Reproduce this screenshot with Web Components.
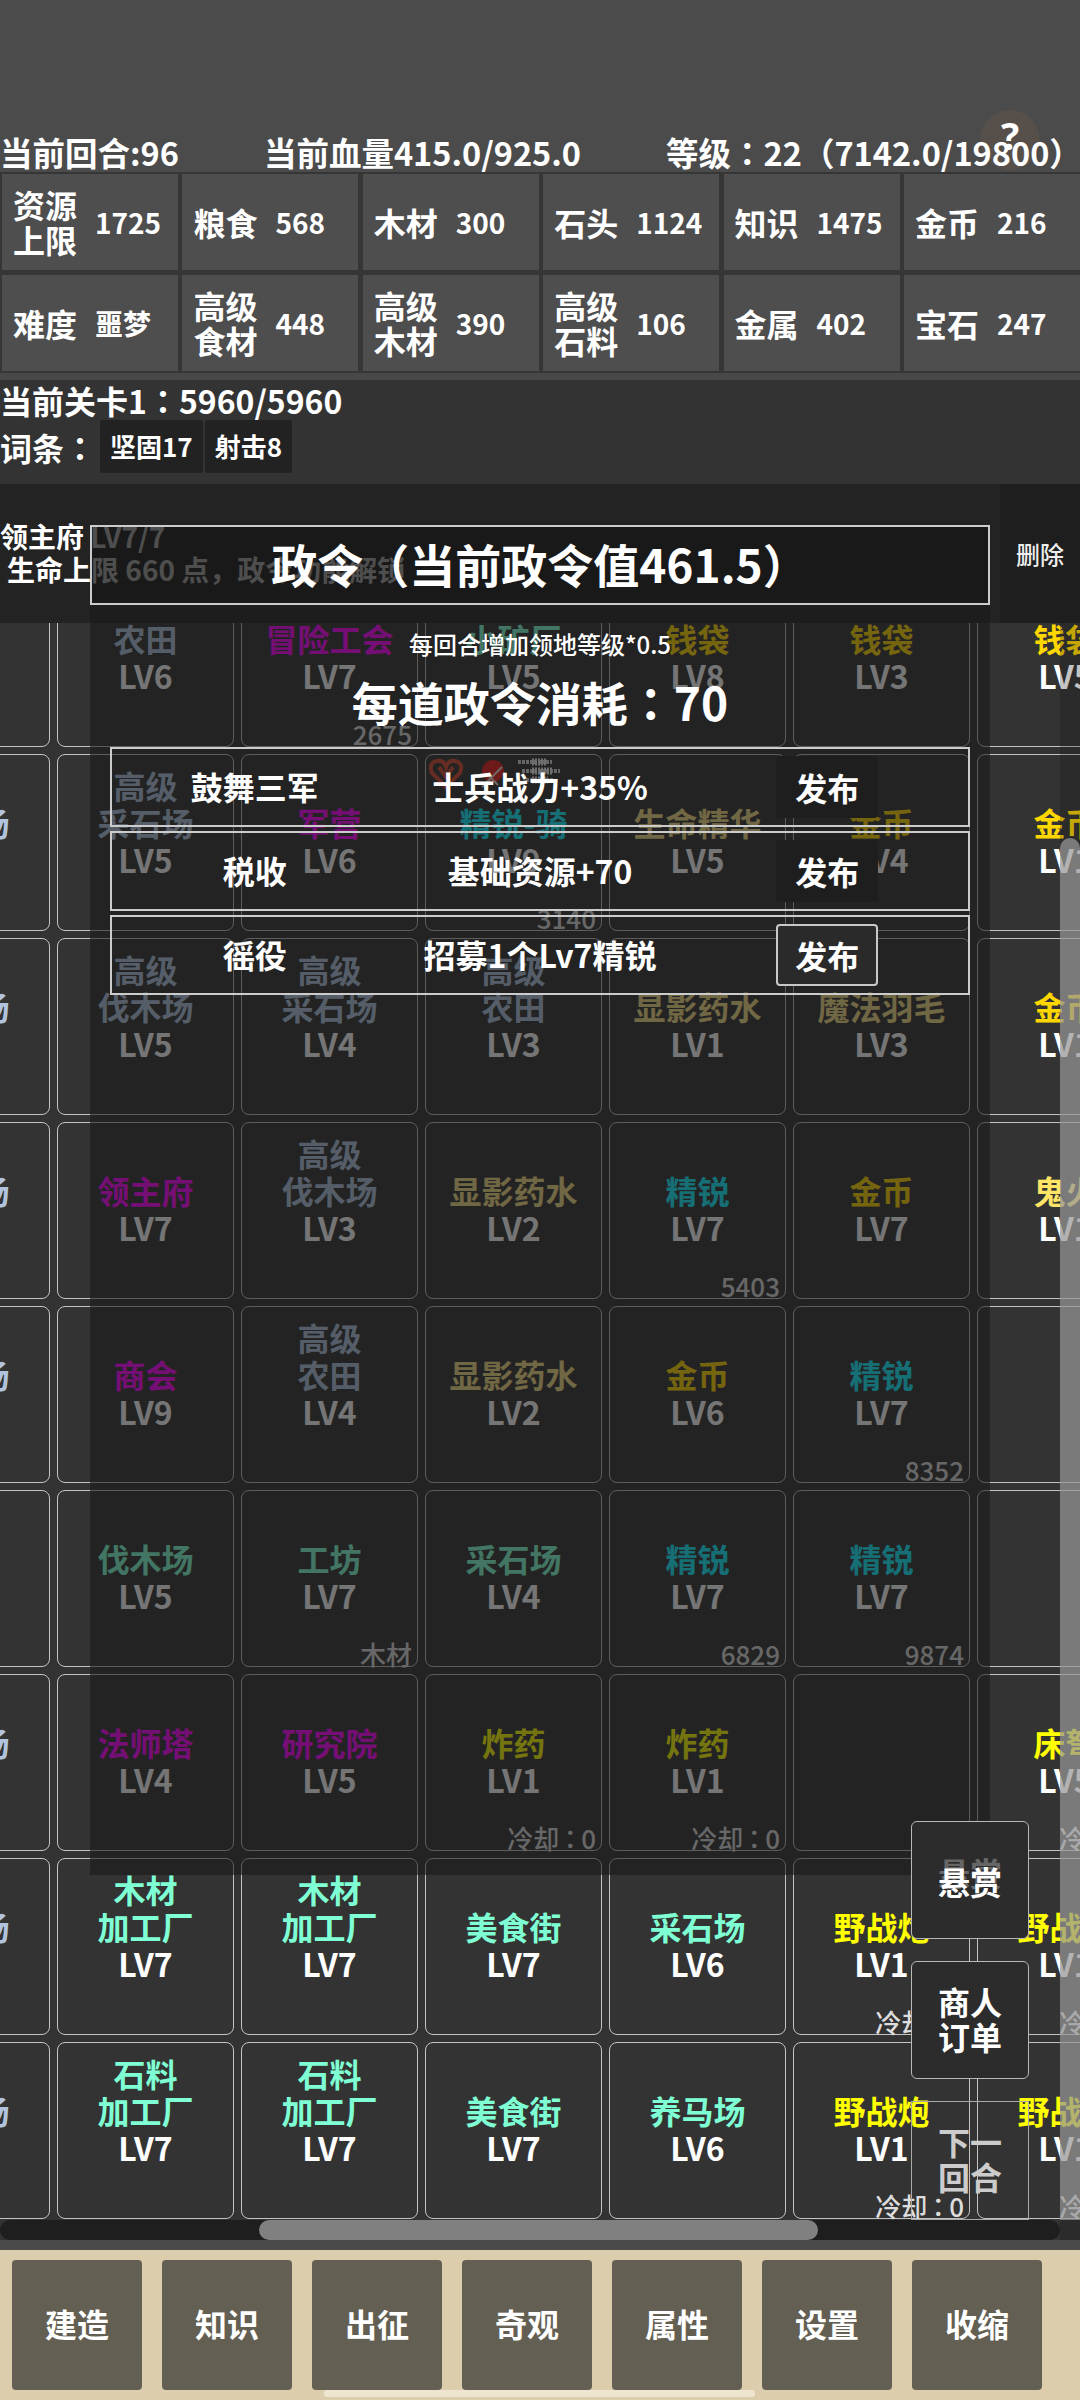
<!DOCTYPE html>
<html lang="zh">
<head>
<meta charset="utf-8">
<title>政令</title>
<style>
    html, body {
        margin: 0;
        width: 1080px;
        height: 2400px;
        overflow: hidden;
        background: #4b4b4b;
        color: #fff;
        font-family: "Noto Sans CJK SC", "Noto Sans", sans-serif;
        font-weight: 700;
    }
    #page {
        display: flex;
        flex-direction: column;
        height: 2400px;
    }
</style>
</head>
<body>
<div id="page">
    <top-stats></top-stats>
    <res-grid></res-grid>
    <stage-info></stage-info>
    <map-view></map-view>
    <bottom-bar></bottom-bar>
</div>

<script>
// the game's full-width colon sits centred, the JP face draws it that way
const COLON = `<span lang="ja" style="font-family:'Noto Sans CJK JP',sans-serif">：</span>`;

class TopStats extends HTMLElement {
    constructor() {
        super();
        this.attachShadow({mode: 'open'});
        this.shadowRoot.innerHTML = `
            <style>
                :host {
                    display: flex;
                    position: relative;
                    height: 172px;
                    align-items: flex-end;
                    font-size: 32.5px;
                    line-height: 40px;
                    gap: 85px;
                    white-space: nowrap;
                }
                .help {
                    position: absolute;
                    left: 980px;
                    top: 110px;
                    width: 60px;
                    height: 60px;
                    border-radius: 50%;
                    background: #564f4a;
                    font: 700 38px/50px "Noto Sans", sans-serif;
                    text-align: center;
                }
                span { position: relative; }
            </style>
            <div class="help">?</div>
            <span>当前回合:96</span>
            <span>当前血量415.0/925.0</span>
            <span>等级${COLON}22（7142.0/19800）</span>
        `;
    }
}

class ResCell extends HTMLElement {
    constructor() {
        super();
        this.attachShadow({mode: 'open'});
        this.shadowRoot.innerHTML = `
            <style>
                :host {
                    display: flex;
                    align-items: center;
                    gap: 18px;
                    padding-left: 11px;
                    background: #4e4e4e;
                    font-size: 32px;
                    line-height: 35px;
                }
                .val {
                    font-size: 28px;
                }
                .label {
                    width: 64px;
                }
            </style>
            <div class="label"><slot></slot></div>
            <div class="val"></div>
        `;
    }

    connectedCallback() {
        this.shadowRoot.querySelector(".val").textContent = this.getAttribute("value");
    }
}

class ResGrid extends HTMLElement {
    constructor() {
        super();
        this.attachShadow({mode: 'open'});
        this.shadowRoot.innerHTML = `
            <style>
                :host {
                    display: grid;
                    grid-template-columns: repeat(6, 176px);
                    grid-auto-rows: 96px;
                    column-gap: 4.4px;
                    row-gap: 5px;
                    padding: 2px 0 2px 2px;
                    background: #363636;
                }
            </style>
            <res-cell value="1725">资源<br>上限</res-cell>
            <res-cell value="568">粮食</res-cell>
            <res-cell value="300">木材</res-cell>
            <res-cell value="1124">石头</res-cell>
            <res-cell value="1475">知识</res-cell>
            <res-cell value="216">金币</res-cell>
            <res-cell value="噩梦">难度</res-cell>
            <res-cell value="448">高级<br>食材</res-cell>
            <res-cell value="390">高级<br>木材</res-cell>
            <res-cell value="106">高级<br>石料</res-cell>
            <res-cell value="402">金属</res-cell>
            <res-cell value="247">宝石</res-cell>
        `;
    }
}

class StageInfo extends HTMLElement {
    constructor() {
        super();
        this.attachShadow({mode: 'open'});
        this.shadowRoot.innerHTML = `
            <style>
                :host {
                    display: block;
                    height: 111px;
                    box-sizing: border-box;
                    border-top: 7px solid #484848;
                    background: #333;
                    font-size: 32px;
                    line-height: 40px;
                    white-space: nowrap;
                }
                .words {
                    display: flex;
                    align-items: center;
                    gap: 2px;
                }
                .label {
                    width: 98px;
                }
                .chip {
                    padding: 0 10px;
                    height: 53px;
                    line-height: 52px;
                    background: #222;
                    border-radius: 3px;
                    font-size: 26px;
                }
            </style>
            <div>当前关卡1${COLON}5960/5960</div>
            <div class="words">
                <div class="label">词条${COLON}</div>
                <div class="chip">坚固17</div>
                <div class="chip">射击8</div>
            </div>
        `;
    }
}

class TileCell extends HTMLElement {
    constructor() {
        super();
        this.attachShadow({mode: 'open'});
        this.shadowRoot.innerHTML = `
            <style>
                :host {
                    display: flex;
                    position: relative;
                    flex-direction: column;
                    justify-content: flex-end;
                    box-sizing: border-box;
                    width: 177px;
                    height: 177px;
                    padding-bottom: 52px;
                    border: 1px solid #c4c4c4;
                    border-radius: 8px;
                    text-align: center;
                    font-size: 32px;
                    line-height: 37px;
                    white-space: nowrap;
                }
                .name { color: var(--c, #fff); }
                .note {
                    position: absolute;
                    right: 5px;
                    bottom: -1px;
                    font-size: 26px;
                    font-weight: 500;
                    line-height: 26px;
                    color: #ddd;
                }
                .note span { margin: 0 -2px; }
            </style>
            <div class="name"></div>
            <div class="lv"></div>
            <div class="note"></div>
            <slot></slot>
        `;
    }

    connectedCallback() {
        const root = this.shadowRoot;
        root.querySelector(".name").innerHTML = (this.getAttribute("name") || "").split("|").join("<br>");
        root.querySelector(".lv").textContent = this.getAttribute("lv") || "";
        root.querySelector(".note").innerHTML = (this.getAttribute("note") || "").replace("：", COLON);
        if (this.getAttribute("color")) this.style.setProperty("--c", this.getAttribute("color"));
    }
}

// name, level, colour key, corner note
const COL = {
    b: "#b0c4de", p: "#ff00ff", a: "#7fffd4", g: "#ffd700", k: "#f2dc84",
    t: "#10f0ff", y: "#ffff00", f: "#ffe566"
};
const CD = "冷却：0";
const ROWS = [
    [null, ["农田","LV6","b"], ["冒险工会","LV7","p","2675"], ["小矿厂","LV5","a"], ["钱袋","LV8","g"], ["钱袋","LV3","g"], ["钱袋","LV5","g"]],
    [["伐木场","LV5","b"], ["高级|采石场","LV5","b"], ["军营","LV6","p"], ["精锐-骑","LV9","t","3140"], ["生命精华","LV5","k"], ["金币","LV4","g"], ["金币","LV1","g"]],
    [["伐木场","LV5","b"], ["高级|伐木场","LV5","b"], ["高级|采石场","LV4","b"], ["高级|农田","LV3","b"], ["显影药水","LV1","k"], ["魔法羽毛","LV3","k"], ["金币","LV1","g"]],
    [["伐木场","LV5","b"], ["领主府","LV7","p"], ["高级|伐木场","LV3","b"], ["显影药水","LV2","k"], ["精锐","LV7","t","5403"], ["金币","LV7","g"], ["鬼火","LV1","f"]],
    [["伐木场","LV5","b"], ["商会","LV9","p"], ["高级|农田","LV4","b"], ["显影药水","LV2","k"], ["金币","LV6","g"], ["精锐","LV7","t","8352"], null],
    [null, ["伐木场","LV5","a"], ["工坊","LV7","a","木材"], ["采石场","LV4","a"], ["精锐","LV7","t","6829"], ["精锐","LV7","t","9874"], null],
    [["伐木场","LV5","b"], ["法师塔","LV4","p"], ["研究院","LV5","p"], ["炸药","LV1","y",CD], ["炸药","LV1","y",CD], null, ["床弩","LV5","y",CD]],
    [["伐木场","LV5","b"], ["木材|加工厂","LV7","a"], ["木材|加工厂","LV7","a"], ["美食街","LV7","a"], ["采石场","LV6","a"], ["野战炮","LV1","y",CD], ["野战炮","LV1","y",CD]],
    [["伐木场","LV5","b"], ["石料|加工厂","LV7","a"], ["石料|加工厂","LV7","a"], ["美食街","LV7","a"], ["养马场","LV6","a"], ["野战炮","LV1","y",CD], ["野战炮","LV1","y",CD]],
];

class TileGrid extends HTMLElement {
    constructor() {
        super();
        this.attachShadow({mode: 'open'});
        let cells = "";
        for (const row of ROWS) {
            for (const t of row) {
                if (!t) { cells += "<tile-cell></tile-cell>"; continue; }
                cells += `<tile-cell name="${t[0]}" lv="${t[1]}" color="${COL[t[2]]}" note="${t[3] || ""}"></tile-cell>`;
            }
        }
        this.shadowRoot.innerHTML = `
            <style>
                :host {
                    display: grid;
                    grid-template-columns: repeat(7, 177px);
                    gap: 7px;
                    margin: 86px 0 0 -127px;
                    width: 1300px;
                }
            </style>
            ${cells}
        `;
        // status icons on the 精锐-骑 tile
        this.shadowRoot.querySelectorAll("tile-cell")[10].innerHTML = `
            <svg style="position:absolute;left:0;top:0" width="140" height="40" viewBox="0 0 140 40">
                <path d="M20 32 L6 18 Q2 8 11 6 Q18 5 20 12 Q22 5 29 6 Q38 8 34 18 Z M13 12 L20 22 L27 12" fill="none" stroke="#d84a34" stroke-width="4"/>
                <circle cx="67" cy="16" r="11" fill="#e8201c"/>
                <path d="M56 32 L76 12 M60 18 L72 30" stroke="#f0d8d8" stroke-width="2"/>
                <path d="M92 7 H126 M96 16 H134 M100 25 H128" stroke="#d8d8d8" stroke-width="4" stroke-dasharray="3 1"/>
                <path d="M106 7 H120 M106 16 H126 M106 25 H122" stroke="#f0f0f0" stroke-width="7" stroke-dasharray="2 1"/>
            </svg>`;
    }
}

class InfoPanel extends HTMLElement {
    constructor() {
        super();
        this.attachShadow({mode: 'open'});
        this.shadowRoot.innerHTML = `
            <style>
                :host {
                    display: flex;
                    position: absolute;
                    left: 0;
                    top: 0;
                    width: 1080px;
                    height: 139px;
                    background: #232323;
                    font-size: 28px;
                    line-height: 33px;
                    white-space: nowrap;
                }
                .text {
                    flex: 1;
                    padding-top: 36px;
                }
                .del {
                    display: flex;
                    width: 80px;
                    align-items: center;
                    justify-content: center;
                    background: #1e1e1e;
                    font-size: 24px;
                    font-weight: 500;
                    color: #eee;
                }
                .l2 { padding-left: 7px; }
            </style>
            <div class="text">
                <div>领主府 LV7/7</div>
                <div class="l2">生命上限 660 点，政令功能解锁</div>
            </div>
            <div class="del">删除</div>
        `;
    }
}

class DecreeRow extends HTMLElement {
    constructor() {
        super();
        this.attachShadow({mode: 'open'});
        this.shadowRoot.innerHTML = `
            <style>
                :host {
                    display: grid;
                    grid-template-columns: 1fr 1fr 1fr;
                    align-items: center;
                    justify-items: center;
                    box-sizing: border-box;
                    height: 80px;
                    border: 2px solid #ccc;
                    font-size: 32px;
                    white-space: nowrap;
                }
                .txt { margin-top: -3px; }
                button {
                    all: unset;
                    box-sizing: border-box;
                    width: 102px;
                    height: 62px;
                    margin-left: 4px;
                    line-height: 56px;
                    text-align: center;
                    border-radius: 4px;
                    background: #1e1e1e;
                    color: #fff;
                }
                :host([active]) button {
                    border: 2px solid #c8c8c8;
                    background: #2a2a2a;
                }
            </style>
            <div class="txt"><slot name="name"></slot></div>
            <div class="txt"><slot name="effect"></slot></div>
            <button>发布</button>
        `;
    }
}

class DecreeModal extends HTMLElement {
    constructor() {
        super();
        this.attachShadow({mode: 'open'});
        this.shadowRoot.innerHTML = `
            <style>
                :host {
                    display: block;
                    position: absolute;
                    left: 90px;
                    top: 41px;
                    width: 900px;
                    height: 1350px;
                    background: rgba(25,25,25,.6);
                    text-align: center;
                }
                h1 {
                    margin: 0;
                    box-sizing: border-box;
                    height: 80px;
                    border: 2px solid #ccc;
                    font-size: 46px;
                    font-weight: 700;
                    line-height: 72px;
                    background: rgba(20,20,20,.4);
                }
                .sub {
                    font-size: 24px;
                    font-weight: 500;
                    line-height: 30px;
                    margin-top: 24px;
                }
                h2 {
                    margin: 12px 0 0;
                    font-size: 46px;
                    font-weight: 700;
                    line-height: 60px;
                }
                .rows {
                    display: flex;
                    flex-direction: column;
                    gap: 4px;
                    margin: 16px 20px 0;
                }
            </style>
            <h1>政令（当前政令值461.5）</h1>
            <div class="sub">每回合增加领地等级*0.5</div>
            <h2>每道政令消耗${COLON}70</h2>
            <div class="rows"><slot></slot></div>
        `;
    }
}

class SideButtons extends HTMLElement {
    constructor() {
        super();
        this.attachShadow({mode: 'open'});
        this.shadowRoot.innerHTML = `
            <style>
                :host {
                    display: flex;
                    position: absolute;
                    left: 911px;
                    top: 1337px;
                    width: 118px;
                    flex-direction: column;
                    gap: 22px;
                    font-size: 32px;
                    line-height: 35px;
                    text-align: center;
                }
                .btn {
                    display: flex;
                    position: relative;
                    box-sizing: border-box;
                    height: 118px;
                    padding-bottom: 3px;
                    align-items: center;
                    justify-content: center;
                    border: 1px solid #b8b8b8;
                    border-radius: 6px;
                    background: #2c2c2c;
                }
                .ghost {
                    position: absolute;
                    left: 0;
                    right: 0;
                    top: 33px;
                    color: #666;
                }
                .last {
                    height: 119px;
                    background: none;
                    color: #ccc;
                    border-color: #aaa;
                    border-radius: 0;
                }
                .top { position: relative; margin-top: 6px; }
            </style>
            <div class="btn"><span class="ghost">悬赏</span><span class="top">悬赏</span></div>
            <div class="btn">商人<br>订单</div>
            <div class="btn last">下一<br>回合</div>
        `;
    }
}

class MapView extends HTMLElement {
    constructor() {
        super();
        this.attachShadow({mode: 'open'});
        this.shadowRoot.innerHTML = `
            <style>
                :host {
                    display: block;
                    position: relative;
                    flex: 1;
                    min-height: 0;
                    overflow: hidden;
                    background: #333;
                }
                .track-h {
                    position: absolute;
                    left: 0;
                    top: 1736px;
                    width: 1060px;
                    height: 20px;
                    border-radius: 10px;
                    background: #1e1e1e;
                }
                .thumb-h {
                    position: absolute;
                    left: 259px;
                    top: 0;
                    width: 559px;
                    height: 20px;
                    border-radius: 10px;
                    background: #808080;
                }
                .track-v {
                    position: absolute;
                    left: 1060px;
                    top: 139px;
                    width: 20px;
                    height: 1617px;
                    background: rgba(20,20,20,.25);
                }
                .thumb-v {
                    position: absolute;
                    left: 0;
                    top: 215px;
                    bottom: 20px;
                    width: 20px;
                    border-radius: 10px 10px 0 0;
                    background: rgba(170,170,170,.63);
                }
            </style>
            <tile-grid></tile-grid>
            <info-panel></info-panel>
            <decree-modal>
                <decree-row><span slot="name">鼓舞三军</span><span slot="effect">士兵战力+35%</span></decree-row>
                <decree-row><span slot="name">税收</span><span slot="effect">基础资源+70</span></decree-row>
                <decree-row active><span slot="name">徭役</span><span slot="effect">招募1个Lv7精锐</span></decree-row>
            </decree-modal>
            <side-buttons></side-buttons>
            <div class="track-h"><div class="thumb-h"></div></div>
            <div class="track-v"><div class="thumb-v"></div></div>
        `;
    }
}

class BottomBar extends HTMLElement {
    constructor() {
        super();
        this.attachShadow({mode: 'open'});
        const names = ["建造", "知识", "出征", "奇观", "属性", "设置", "收缩"];
        this.shadowRoot.innerHTML = `
            <style>
                :host {
                    display: block;
                    position: relative;
                    border-top: 10px solid #4a4a4a;
                    height: 150px;
                    background: #dccdad;
                }
                .btns {
                    display: flex;
                    gap: 20px;
                    padding: 10px 12px 0;
                }
                .btns div {
                    width: 130px;
                    height: 130px;
                    line-height: 126px;
                    text-align: center;
                    font-size: 32px;
                    border-radius: 4px;
                    background: #645f53;
                }
                .home {
                    position: absolute;
                    left: 324px;
                    top: 140px;
                    width: 431px;
                    height: 7px;
                    border-radius: 3px;
                    background: #efe6d2;
                }
            </style>
            <div class="btns">${names.map(n => `<div>${n}</div>`).join("")}</div>
            <div class="home"></div>
        `;
    }
}

customElements.define("top-stats", TopStats);
customElements.define("res-cell", ResCell);
customElements.define("res-grid", ResGrid);
customElements.define("stage-info", StageInfo);
customElements.define("tile-cell", TileCell);
customElements.define("tile-grid", TileGrid);
customElements.define("info-panel", InfoPanel);
customElements.define("decree-row", DecreeRow);
customElements.define("decree-modal", DecreeModal);
customElements.define("side-buttons", SideButtons);
customElements.define("map-view", MapView);
customElements.define("bottom-bar", BottomBar);
</script>
</body>
</html>
